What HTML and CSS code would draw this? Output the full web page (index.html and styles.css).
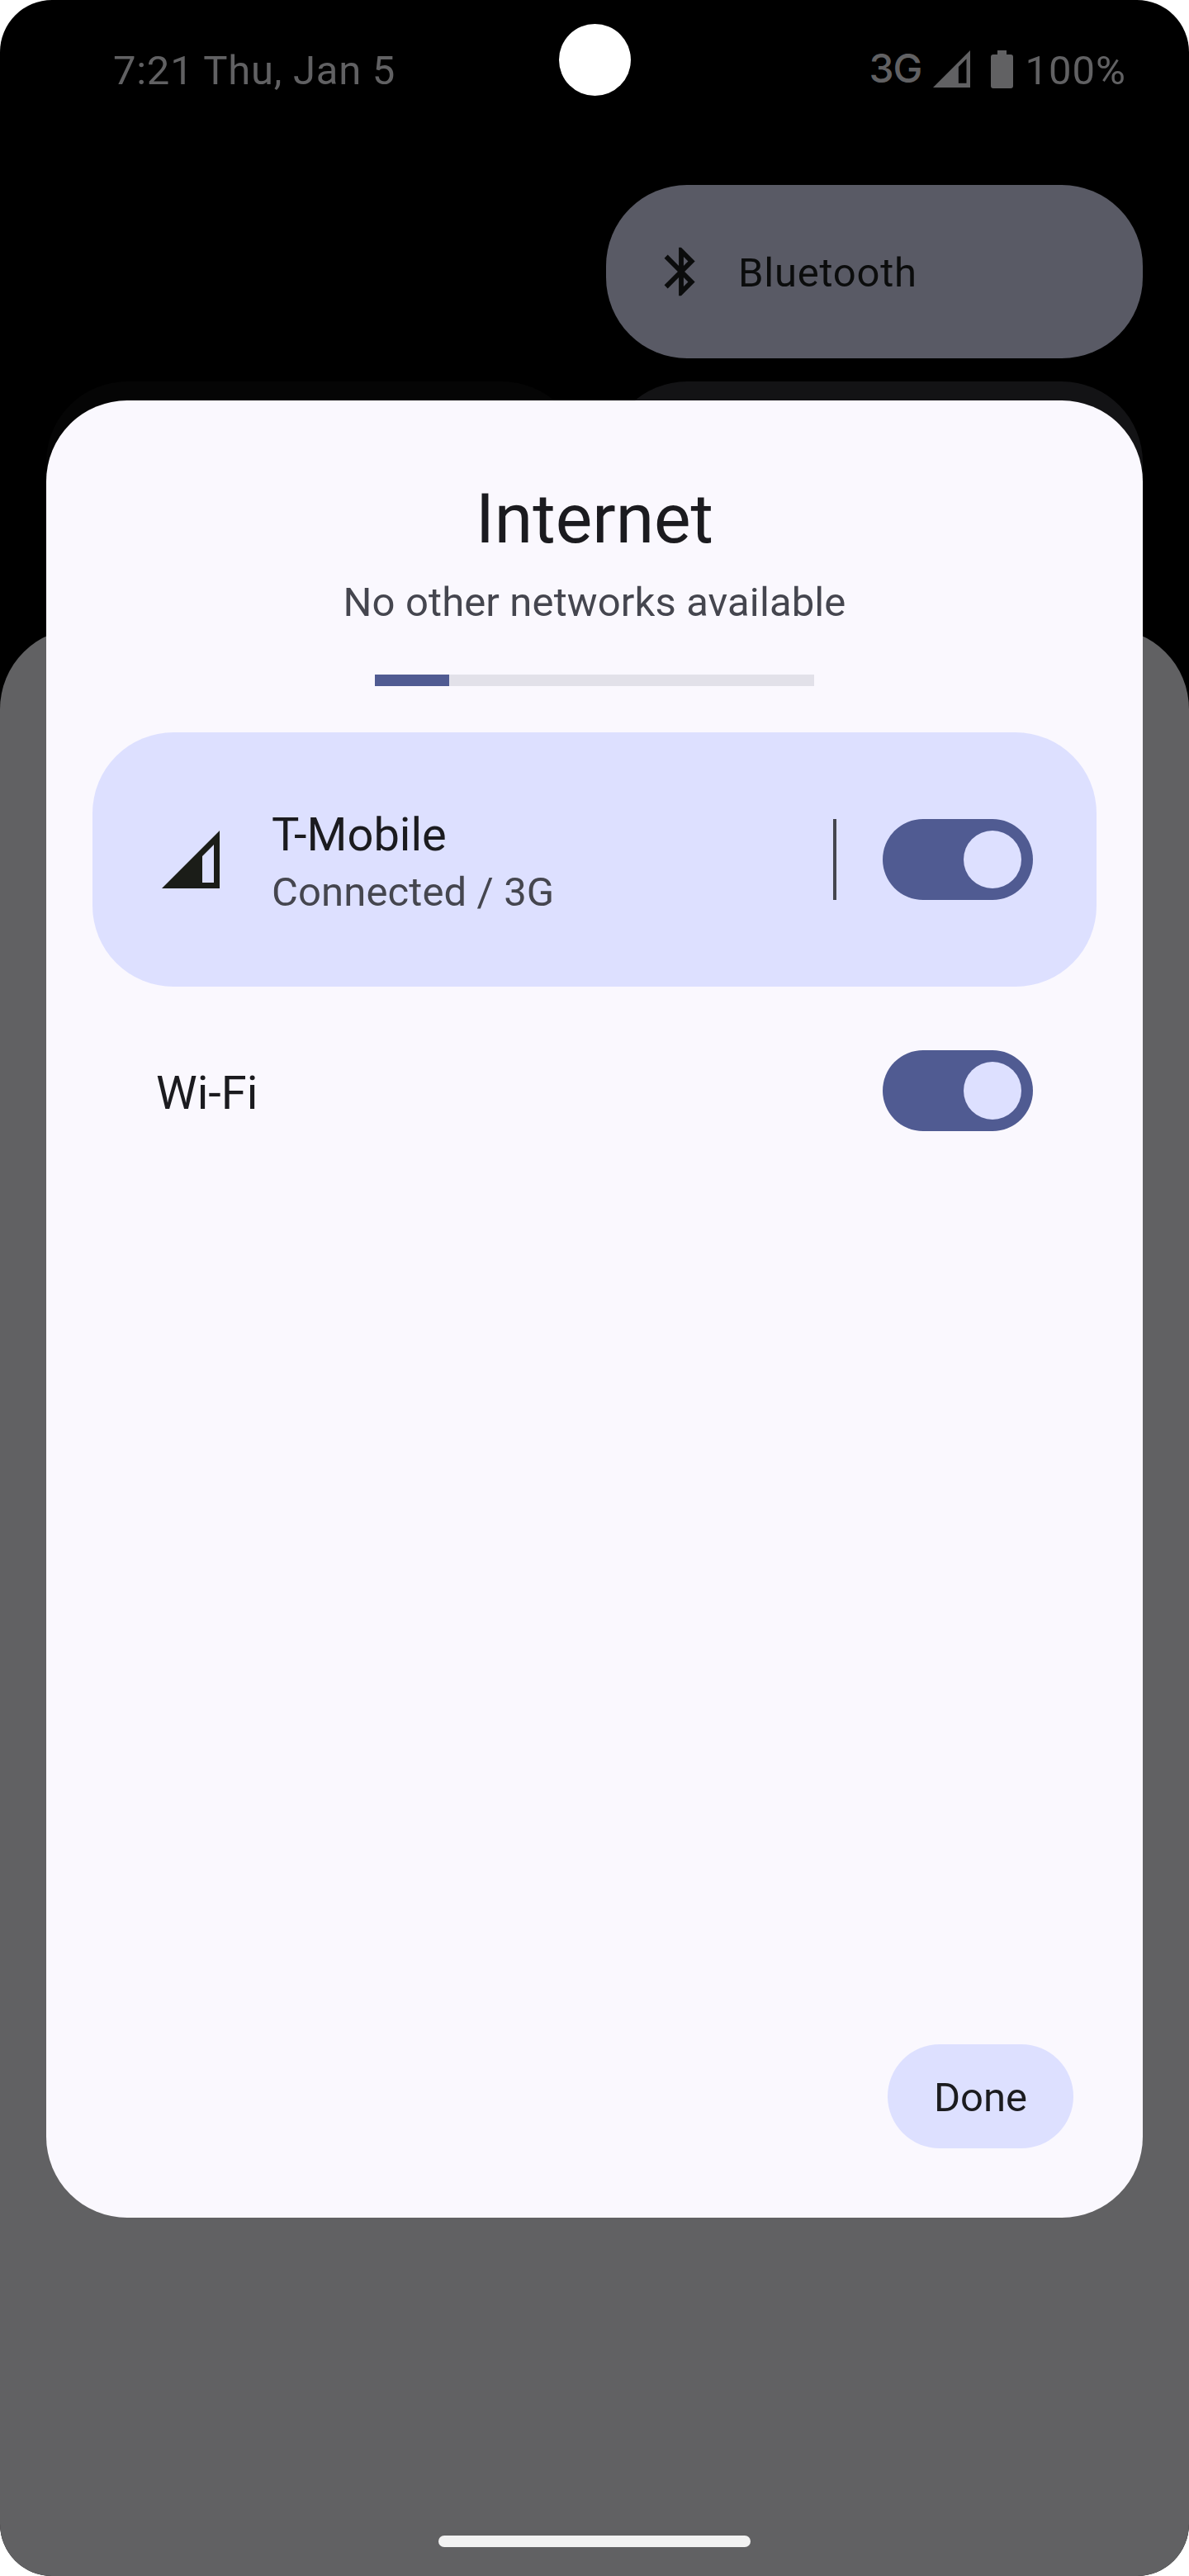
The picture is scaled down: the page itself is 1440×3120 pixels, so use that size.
FILE: index.html
```html
<!DOCTYPE html>
<html lang="en">
<head>
<meta charset="utf-8">
<title>Internet</title>
<link rel="stylesheet" href="styles.css">
</head>
<body>
<div class="screen">
  <div class="shade">
    <header class="status">
      <div class="clock">7:21 Thu, Jan 5</div>
      <div class="indicators">
        <span class="network">3G</span>
        <svg class="signal-small" viewBox="0 0 70 70"><path fill-rule="evenodd" d="M0 70L70 0V70ZM48 31V62H63V16Z"/></svg>
        <svg class="battery" viewBox="0 0 27 46"><path d="M8 0h11v5h5a3 3 0 0 1 3 3v35a3 3 0 0 1-3 3H3a3 3 0 0 1-3-3V8a3 3 0 0 1 3-3h5z"/></svg>
        <span class="percent">100%</span>
      </div>
      <div class="camera"></div>
    </header>
    <div class="tiles">
      <div class="tile tile-empty"></div>
      <div class="tile tile-on">
        <svg class="bluetooth" viewBox="0 0 24 24"><path d="M17.71 7.71L12 2h-1v7.59L6.41 5 5 6.41 10.59 12 5 17.59 6.41 19 11 14.41V22h1l5.71-5.71-4.3-4.29 4.3-4.29zM13 5.83l1.88 1.88L13 9.59V5.83zm1.88 10.46L13 18.17v-3.76l1.88 1.88z"/></svg>
        <span class="tile-label">Bluetooth</span>
      </div>
      <div class="tile tile-dim"></div>
      <div class="tile tile-off"></div>
    </div>
    <div class="notifications"><div class="home-bar"></div></div>
  </div>
  <main class="dialog">
    <h1 class="title">Internet</h1>
    <p class="subtitle">No other networks available</p>
    <div class="progress"><div class="progress-fill"></div></div>
    <section class="row row-active">
      <svg class="signal" viewBox="0 0 70 70"><path fill-rule="evenodd" d="M0 70L70 0V70ZM49 31V63H63V17Z"/></svg>
      <div class="labels">
        <div class="name">T-Mobile</div>
        <div class="state">Connected / 3G</div>
      </div>
      <div class="divider"></div>
      <div class="switch"><div class="thumb"></div></div>
    </section>
    <section class="row row-wifi">
      <div class="name">Wi-Fi</div>
      <div class="switch"><div class="thumb"></div></div>
    </section>
    <button class="done">Done</button>
  </main>
</div>
</body>
</html>
```
FILE: styles.css
```css
* { box-sizing: border-box; }
body { margin: 0; background: #fff; font-family: Roboto, sans-serif; }
svg { display: block; fill: currentColor; flex: none; }

.screen {
  display: grid;
  width: 1440px;
  height: 3120px;
  border-radius: 63px;
  overflow: hidden;
  background: #000;
}
.shade, .dialog { grid-area: 1 / 1; }
.shade { display: flex; flex-direction: column; }

.status {
  position: relative;
  display: flex;
  justify-content: space-between;
  height: 224px;
  padding: 57px 76px 0 137px;
  color: #616163;
  font-size: 49px;
  line-height: 58px;
}
.clock { letter-spacing: 0.73px; }
.indicators { display: flex; }
.network {
  margin: -3px 14px 0 0;
  font-family: Inter, sans-serif;
  font-size: 48px;
  font-weight: 500;
  letter-spacing: -1px;
}
.signal-small { width: 45px; height: 45px; margin: 4px 25px 0 0; }
.battery { width: 27px; height: 46px; margin: 4px 14px 0 0; }
.percent { letter-spacing: 1px; }
.camera {
  position: absolute;
  top: 29px;
  left: 677px;
  width: 87px;
  height: 87px;
  border-radius: 50%;
  background: #fff;
}

.tiles {
  display: grid;
  grid-template-columns: 650px 650px;
  grid-auto-rows: 210px;
  gap: 28px;
  height: 537px;
  padding: 0 56px;
}
.tile { display: flex; align-items: center; border-radius: 98px; }
.tile-on { padding-left: 56px; background: #595a65; color: #0b0c0c; }
.tile-dim { background: #050505; }
.tile-off { background: #131315; }
.bluetooth { width: 70px; height: 70px; }
.tile-label { margin: 4px 0 0 34px; font-size: 49px; line-height: 58px; letter-spacing: 0.75px; }

.notifications {
  display: flex;
  flex: 1;
  justify-content: center;
  align-items: flex-end;
  padding-bottom: 35px;
  border-radius: 98px 98px 0 0;
  background: #616163;
}
.home-bar { width: 378px; height: 14px; border-radius: 7px; background: #f2f2f2; }

.dialog {
  z-index: 1;
  display: flex;
  flex-direction: column;
  align-items: center;
  width: 1328px;
  height: 2201px;
  margin: 485px 56px 0;
  padding: 95px 56px 84px;
  border-radius: 98px;
  background: #faf8fe;
  color: #1b1b1f;
}
.title { margin: 0; font-size: 84px; font-weight: 400; line-height: 98px; }
.subtitle { margin: 23px 0 0; color: #45464f; font-size: 49px; line-height: 58px; letter-spacing: 0.12px; }
.progress { width: 532px; height: 14px; margin: 58px 0 56px; background: #e2e1e9; }
.progress-fill { width: 90px; height: 100%; background: #505b92; }

.row { display: flex; align-items: center; width: 100%; padding: 0 77px 0 84px; }
.row-active { height: 308px; border-radius: 98px; background: #dde0ff; }
.row-wifi { justify-content: space-between; height: 252px; padding-left: 77px; }
.row-wifi .name { padding-top: 6px; }
.signal { width: 70px; height: 70px; color: #1b1d18; }
.labels { flex: 1; margin-left: 63px; padding-top: 6px; }
.name { font-size: 56px; line-height: 66px; }
.state { margin-top: 8px; color: #45464f; font-size: 49px; line-height: 58px; letter-spacing: 0.12px; }
.divider { width: 4px; height: 98px; margin-right: 56px; background: #45464f; }
.switch {
  display: flex;
  align-items: center;
  justify-content: flex-end;
  width: 182px;
  height: 98px;
  padding: 14px;
  border-radius: 49px;
  background: #505b92;
}
.thumb { width: 70px; height: 70px; border-radius: 50%; background: #dde0ff; }

.done {
  align-self: flex-end;
  width: 225px;
  height: 126px;
  margin: auto 28px 0 0;
  padding: 4px 0 0;
  border: 0;
  border-radius: 63px;
  background: #dde0ff;
  color: inherit;
  font: 49px/58px Roboto, sans-serif;
}
```
